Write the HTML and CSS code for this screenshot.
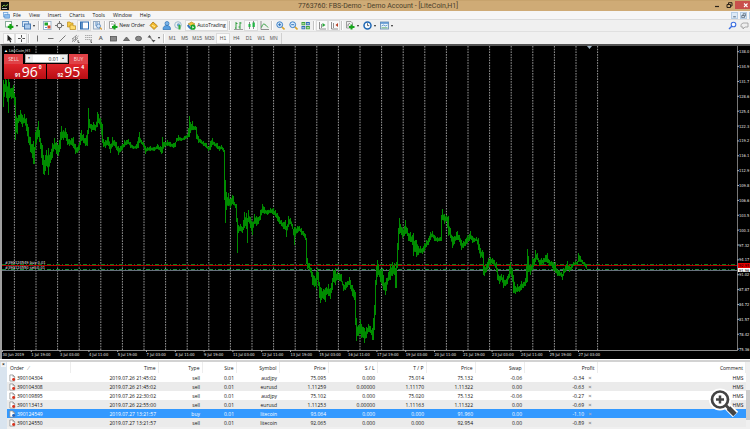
FILE: index.html
```html
<!DOCTYPE html>
<html lang="en">
<head>
    <meta charset="UTF-8">
    <meta name="viewport" content="width=device-width, initial-scale=1.0">
    <title>7763760: FBS-Demo - Demo Account - [LiteCoin,H1]</title>
    <link rel="stylesheet" href="styles.css">
</head>
<body>
    <!-- Icon sprite -->
    <svg class="sprite" aria-hidden="true">
        <symbol id="i-newchart" viewBox="0 0 9 9"><rect x=".5" y=".5" width="6" height="5.5" fill="#fff" stroke="#8a9"/><path d="M5.5 3v5.5M2.8 5.8h5.6" stroke="#12a312" stroke-width="2.2"/></symbol>
        <symbol id="i-profiles" viewBox="0 0 9 9"><rect x=".5" y=".5" width="6" height="5" fill="#d8e8f8" stroke="#6d96c4"/><rect x="2.5" y="3" width="6" height="5" fill="#a9c9ec" stroke="#4d7db5"/></symbol>
        <symbol id="i-market" viewBox="0 0 9 9"><rect x=".5" y=".5" width="7.5" height="8" fill="#fff" stroke="#9fb6cc"/><path d="M1.5 1.5h3.5v3H1.5z" fill="#1ca52c"/><path d="M4.5 4.5h3v3h-3z" fill="#d34a2c"/><path d="M2 6.5h2" stroke="#4a90d9"/></symbol>
        <symbol id="i-target" viewBox="0 0 9 9"><circle cx="4.5" cy="4.5" r="2.4" fill="none" stroke="#666"/><path d="M4.5 0v3M4.5 6v3M0 4.5h3M6 4.5h3" stroke="#777"/></symbol>
        <symbol id="i-folder" viewBox="0 0 9 9"><path d="M.5 1h2.5l1 1H6v4H.5z" fill="#f6c945" stroke="#b98a1b" stroke-width=".7"/><path d="M3 4h2.5l.8.8h2.2v3.7H3z" fill="#ffdc6b" stroke="#b98a1b" stroke-width=".7"/></symbol>
        <symbol id="i-terminal" viewBox="0 0 9 9"><rect x=".5" y="1" width="8" height="7" fill="#fff" stroke="#2f6fb5"/><path d="M2 1v7" stroke="#2f6fb5" stroke-width="1.5"/></symbol>
        <symbol id="i-tester" viewBox="0 0 9 9"><rect x=".5" y=".5" width="6" height="7.5" fill="#e8eef5" stroke="#93a9c2"/><path d="M2 2h3M2 4h2" stroke="#5c8ec4"/><circle cx="5.5" cy="5" r="2" fill="#cfe4fa" stroke="#5484b8" stroke-width=".8"/><path d="M7 6.5l1.8 2" stroke="#d59b35" stroke-width="1.2"/></symbol>
        <symbol id="i-order" viewBox="0 0 9 9"><path d="M.5.5h4l1.5 1.5v5.5H.5z" fill="#fff" stroke="#8a8a8a" stroke-width=".8"/><path d="M2 3h2.5" stroke="#888" stroke-width=".7"/><path d="M5.5 3.5v5M3 6h5.5" stroke="#16a61c" stroke-width="2"/></symbol>
        <symbol id="i-diamond" viewBox="0 0 9 9"><path d="M1 4.5L4 1l4.5 4L5 8.5z" fill="#f3bb2e" stroke="#a9730f" stroke-width=".8"/><path d="M3 4.5l3 1" stroke="#fff0a8"/></symbol>
        <symbol id="i-user" viewBox="0 0 9 9"><circle cx="5" cy="2.5" r="2" fill="#7db6ea" stroke="#2b70b5" stroke-width=".7"/><path d="M1 8.500c0-3 1.500-4 4-4s3.500 1.500 3.500 4z" fill="#5aa0e0" stroke="#2b70b5" stroke-width=".7"/></symbol>
        <symbol id="i-signal" viewBox="0 0 9 9"><circle cx="4" cy="4" r="3.3" fill="none" stroke="#9dbccf"/><circle cx="4.5" cy="4" r="1.7" fill="#6fa9d0"/><path d="M5.5 4v4.5" stroke="#35ad3c" stroke-width="2"/></symbol>
        <symbol id="i-auto" viewBox="0 0 9 9"><path d="M1 3l3.5-2L8 3 4.5 5z" fill="#f2c53c" stroke="#a77c15" stroke-width=".6"/><path d="M.8 4c1 2 2 3 4 4" stroke="#3676bd" stroke-width="2" fill="none"/><circle cx="6" cy="6.2" r="2.6" fill="#17a52a"/><path d="M5.3 5l2 1.2-2 1.2z" fill="#fff"/></symbol>
        <symbol id="i-bars" viewBox="0 0 9 9"><path d="M2 1v7M1 7h1M2 2.5h1.5M6 1v7M4.5 6H6M6 2h1.5" stroke="#35a043" fill="none"/><path d="M0 8.5h9" stroke="#777" stroke-width=".7"/></symbol>
        <symbol id="i-candle" viewBox="0 0 9 9"><path d="M2.5 1v7M6.5 0v8" stroke="#555" stroke-width=".7"/><path d="M1.5 3h2v3h-2zM5.5 1.5h2.3V6H5.5z" fill="#22b545"/></symbol>
        <symbol id="i-line" viewBox="0 0 9 9"><path d="M1 0v8.5h8" stroke="#777" fill="none" stroke-width=".8"/><path d="M1.5 6.5C3 1 5 3 8 6.5" stroke="#35a043" fill="none"/></symbol>
        <symbol id="i-zoomin" viewBox="0 0 9 9"><path d="M5.5 5.5l3 3" stroke="#dca52b" stroke-width="1.6"/><circle cx="3.7" cy="3.7" r="2.9" fill="#d9ecff" stroke="#3c7fc5"/><path d="M2.2 3.7h3M3.7 2.2v3" stroke="#2569ad" stroke-width=".9"/></symbol>
        <symbol id="i-zoomout" viewBox="0 0 9 9"><path d="M5.5 5.5l3 3" stroke="#dca52b" stroke-width="1.6"/><circle cx="3.7" cy="3.7" r="2.9" fill="#d9ecff" stroke="#3c7fc5"/><path d="M2.2 3.7h3" stroke="#2569ad" stroke-width=".9"/></symbol>
        <symbol id="i-tile" viewBox="0 0 9 9"><path d="M.5 1h3.8v3.3H.5zM5 5h3.8v3.3H5z" fill="#3ea33c"/><path d="M5 1h3.8v3.3H5zM.5 5h3.8v3.3H.5z" fill="#2d69b8"/><path d="M1.2 2.8h2.3M5.7 2.8H8M1.2 6.8h2.3M5.7 6.8H8" stroke="#e7f2d8" stroke-width=".9"/></symbol>
        <symbol id="i-scroll" viewBox="0 0 9 9"><path d="M1.5 1v7H8M3.5 3v4" stroke="#777" fill="none" stroke-width=".8"/><path d="M4.5 2l3 2-3 2z" fill="#23a436"/></symbol>
        <symbol id="i-shift" viewBox="0 0 9 9"><path d="M1.5 1v7H8M3.5 2v5" stroke="#777" fill="none" stroke-width=".8"/><path d="M8 2L5.500 4 8 6z" fill="#b84127"/></symbol>
        <symbol id="i-indicator" viewBox="0 0 9 9"><path d="M.5.5H5L6.5 2v5h-6z" fill="#eee" stroke="#888" stroke-width=".8"/><path d="M2 5.5c0-3 1-3 2-3" stroke="#666" fill="none" stroke-width=".8"/><path d="M5.5 3.5v5M3 6h5.5" stroke="#16a61c" stroke-width="2"/></symbol>
        <symbol id="i-clock" viewBox="0 0 9 9"><circle cx="4.5" cy="4.5" r="3.5" fill="#f4faff" stroke="#1d67b5" stroke-width="1.5"/><path d="M4.5 2.3v2.3h1.7" stroke="#444" fill="none" stroke-width=".8"/></symbol>
        <symbol id="i-template" viewBox="0 0 9 9"><rect x=".5" y="1" width="8" height="7" fill="#e8f3fd" stroke="#6f93b8" stroke-width=".9"/><path d="M.5 2h8" stroke="#3f82c8" stroke-width="1.3"/><path d="M1.5 5l2-1 2 1 2-1" stroke="#3b80b9" fill="none" stroke-width=".7"/><path d="M1.5 6.8h6" stroke="#58aa58" stroke-width=".8"/></symbol>
        <symbol id="i-search" viewBox="0 0 9 9"><circle cx="5.5" cy="3.5" r="2.3" fill="#fff" stroke="#3c6fe0" stroke-width="1.1"/><path d="M4 5L1 8" stroke="#3c6fe0" stroke-width="1.5"/></symbol>
        <symbol id="i-chat" viewBox="0 0 9 9"><path d="M3 2h5v4H5L3 8V6H1V3.5z" fill="#eee" stroke="#999" stroke-width=".8"/></symbol>
        <symbol id="i-cursor" viewBox="0 0 9 9"><path d="M2.5.8v6.5L4 6l1.3 2.5 1-.5-1.1-2.5h2z" fill="#222"/></symbol>
        <symbol id="i-cross" viewBox="0 0 9 9"><path d="M4.5 1v2.7M4.5 5.3V8M1 4.5h2.7M5.3 4.5H8" stroke="#555"/></symbol>
        <symbol id="i-vline" viewBox="0 0 9 9"><path d="M4.5 1.5v6" stroke="#777"/></symbol>
        <symbol id="i-hline" viewBox="0 0 9 9"><path d="M2 4.5h5.5" stroke="#777"/></symbol>
        <symbol id="i-trend" viewBox="0 0 9 9"><path d="M1.5 7.5l6-6" stroke="#777"/></symbol>
        <symbol id="i-channel" viewBox="0 0 9 9"><path d="M1 5l5-4M1 8l6.5-6M3 8l4-4M2 4v3M4.5 2v4" stroke="#888" stroke-width=".8"/><path d="M7 6v2.5h1.5" stroke="#444" fill="none" stroke-width=".8"/></symbol>
        <symbol id="i-fibo" viewBox="0 0 9 9"><path d="M1 1.5h7M1 3.5h7M1 5.5h7" stroke="#999" stroke-width=".8" stroke-dasharray="1.5 .5"/><path d="M7 6v2.5h1" stroke="#444" fill="none" stroke-width=".8"/></symbol>
        <symbol id="i-rect" viewBox="0 0 9 9"><rect x="1.5" y="2.5" width="6" height="4.5" fill="#888" stroke="#555" stroke-width=".8"/></symbol>
        <symbol id="i-tri" viewBox="0 0 9 9"><path d="M1.5 6.5h6l-3-3.5z" fill="#777" stroke="#555" stroke-width=".8"/></symbol>
        <symbol id="i-ellipse" viewBox="0 0 9 9"><ellipse cx="4.5" cy="4.5" rx="3" ry="2.2" fill="#888" stroke="#555" stroke-width=".8"/></symbol>
        <symbol id="i-arrows" viewBox="0 0 9 9"><path d="M.5 3.5l2-2.5 2 2.5zM4.5 6h4l-2 2.5z" fill="#555"/><path d="M2.5 3l4 4" stroke="#555"/></symbol>
        <symbol id="i-doc" viewBox="0 0 8 8"><path d="M1 .5h3.500l2 2v5H1z" fill="#fff" stroke="#8a8a8a" stroke-width=".8"/><path d="M4.5.5v2h2" fill="none" stroke="#777" stroke-width=".6"/><circle cx="5.3" cy="5.8" r="1.7" fill="currentColor"/></symbol>
    </svg>

    <header class="title-bar">
        <svg class="app-icon" viewBox="0 0 8 8"><rect width="8" height="8" fill="#111"/><path d="M1 5l2-2 1.5 1L7 2.5" stroke="#7fb23e" fill="none"/><path d="M1 6.5h5" stroke="#ddd" stroke-width=".8"/></svg>
        <h1>7763760: FBS-Demo - Demo Account - [LiteCoin,H1]</h1>
        <div class="window-controls">
            <button aria-label="Minimize"><svg viewBox="0 0 8 8"><path d="M2 5.5h4" stroke="#2a2218" stroke-width="1.2"/></svg></button>
            <button aria-label="Restore"><svg viewBox="0 0 8 8"><path d="M2 3.5h3.5v3H2zM3.5 3.5V1.7H7V5H5.5" stroke="#2a2218" fill="none"/></svg></button>
            <button class="close" aria-label="Close"><svg viewBox="0 0 8 8"><path d="M3 2.5l3.5 3.5M6.500 2.5L3 6" stroke="#fff" stroke-width="1.1"/></svg></button>
        </div>
    </header>

    <nav class="menu-bar">
        <svg class="menu-icon" viewBox="0 0 8 8"><rect x=".5" y=".5" width="5" height="5" fill="#e5f2ff" stroke="#79a9dc"/><rect x="2" y="3" width="5.5" height="4" fill="#8dbcec" stroke="#4c8bd0" stroke-width=".7"/></svg>
        <a href="#">File</a>
        <a href="#">View</a>
        <a href="#">Insert</a>
        <a href="#">Charts</a>
        <a href="#">Tools</a>
        <a href="#">Window</a>
        <a href="#">Help</a>
        <div class="child-controls">
            <button aria-label="Minimize chart"><svg viewBox="0 0 8 8"><path d="M2.5 5.5h3" stroke="#456"/></svg></button>
            <button aria-label="Restore chart"><svg viewBox="0 0 8 8"><path d="M2 4h3v2.5H2zM3.5 4V2h3v2.5H5" stroke="#456" fill="none" stroke-width=".8"/></svg></button>
            <button aria-label="Close chart"></button>
        </div>
    </nav>

    <div class="toolbar standard">
        <button class="tool drop" aria-label="New chart"><svg><use href="#i-newchart"/></svg></button>
        <button class="tool drop" aria-label="Profiles"><svg><use href="#i-profiles"/></svg></button>
        <span class="sep"></span>
        <div class="group panels">
            <button class="tool" aria-label="Market Watch"><svg><use href="#i-market"/></svg></button>
            <button class="tool" aria-label="Data Window"><svg><use href="#i-target"/></svg></button>
            <button class="tool" aria-label="Navigator"><svg><use href="#i-folder"/></svg></button>
            <button class="tool pressed" aria-label="Terminal"><svg><use href="#i-terminal"/></svg></button>
            <button class="tool" aria-label="Strategy Tester"><svg><use href="#i-tester"/></svg></button>
        </div>
        <span class="sep"></span>
        <button class="tool wide"><svg><use href="#i-order"/></svg>New Order</button>
        <div class="group trio">
            <button class="tool" aria-label="MetaEditor"><svg><use href="#i-diamond"/></svg></button>
            <button class="tool" aria-label="Community"><svg><use href="#i-user"/></svg></button>
            <button class="tool" aria-label="Signals"><svg><use href="#i-signal"/></svg></button>
        </div>
        <button class="tool wide pressed"><svg><use href="#i-auto"/></svg>AutoTrading</button>
        <span class="sep"></span>
        <div class="group trio">
            <button class="tool" aria-label="Bar chart"><svg><use href="#i-bars"/></svg></button>
            <button class="tool pressed" aria-label="Candlesticks"><svg><use href="#i-candle"/></svg></button>
            <button class="tool" aria-label="Line chart"><svg><use href="#i-line"/></svg></button>
        </div>
        <span class="sep"></span>
        <div class="group trio">
            <button class="tool" aria-label="Zoom in"><svg><use href="#i-zoomin"/></svg></button>
            <button class="tool" aria-label="Zoom out"><svg><use href="#i-zoomout"/></svg></button>
            <button class="tool" aria-label="Tile windows"><svg><use href="#i-tile"/></svg></button>
        </div>
        <span class="sep"></span>
        <button class="tool pressed" aria-label="Auto scroll"><svg><use href="#i-scroll"/></svg></button>
        <button class="tool pressed" aria-label="Chart shift"><svg><use href="#i-shift"/></svg></button>
        <span class="sep"></span>
        <button class="tool drop" aria-label="Indicators"><svg><use href="#i-indicator"/></svg></button>
        <button class="tool drop" aria-label="Periods"><svg><use href="#i-clock"/></svg></button>
        <button class="tool drop" aria-label="Templates"><svg><use href="#i-template"/></svg></button>
        <div class="right">
            <button class="tool" aria-label="Search"><svg><use href="#i-search"/></svg></button>
            <button class="tool" aria-label="Chat"><svg><use href="#i-chat"/></svg></button>
        </div>
    </div>

    <div class="toolbar">
        <button class="tool pressed" aria-label="Cursor"><svg><use href="#i-cursor"/></svg></button>
        <button class="tool pressed" aria-label="Crosshair"><svg><use href="#i-cross"/></svg></button>
        <span class="sep"></span>
        <div class="group nine">
            <button class="tool" aria-label="Vertical line"><svg><use href="#i-vline"/></svg></button>
            <button class="tool" aria-label="Horizontal line"><svg><use href="#i-hline"/></svg></button>
            <button class="tool" aria-label="Trendline"><svg><use href="#i-trend"/></svg></button>
            <button class="tool" aria-label="Channel"><svg><use href="#i-channel"/></svg></button>
            <button class="tool" aria-label="Fibonacci"><svg><use href="#i-fibo"/></svg></button>
            <button class="tool letter">A</button>
            <button class="tool" aria-label="Rectangle"><svg><use href="#i-rect"/></svg></button>
            <button class="tool" aria-label="Triangle"><svg><use href="#i-tri"/></svg></button>
            <button class="tool" aria-label="Ellipse"><svg><use href="#i-ellipse"/></svg></button>
        </div>
        <button class="tool drop" aria-label="Arrows"><svg><use href="#i-arrows"/></svg></button>
        <span class="sep"></span>
        <div class="group nine periods">
            <button class="tool">M1</button>
            <button class="tool">M5</button>
            <button class="tool">M15</button>
            <button class="tool">M30</button>
            <button class="tool pressed">H1</button>
            <button class="tool">H4</button>
            <button class="tool">D1</button>
            <button class="tool">W1</button>
            <button class="tool">MN</button>
        </div>
        <span class="edge"></span>
    </div>

    <main class="chart">
        <svg class="plot" id="plot"></svg>
        <svg class="prices" id="prices"></svg>

        <div class="one-click">
            <p class="symbol">▲ LiteCoin,H1</p>
            <div class="trade">
                <button class="side">SELL</button>
                <div class="volume">
                    <button aria-label="Decrease volume">▼</button>
                    <input type="text" value="0.01" aria-label="Volume">
                    <button aria-label="Increase volume">▲</button>
                </div>
                <button class="side">BUY</button>
            </div>
            <div class="quotes">
                <button class="quote"><small>91</small><b>96</b><sup>0</sup></button>
                <button class="quote"><small>92</small><b>95</b><sup>4</sup></button>
            </div>
        </div>
    </main>

    <section class="terminal">
        <div class="grip"><button aria-label="Close terminal">×</button></div>
        <table>
            <colgroup>
                <col class="c-order"><col class="c-time"><col class="c-type"><col class="c-size"><col class="c-symbol">
                <col class="c-num"><col class="c-num"><col class="c-num"><col class="c-num"><col class="c-num">
                <col class="c-profit"><col>
            </colgroup>
            <thead>
                <tr><th>Order <i>⁄</i></th><th>Time</th><th>Type</th><th>Size</th><th>Symbol</th><th>Price</th><th>S / L</th><th>T / P</th><th>Price</th><th>Swap</th><th>Profit</th><th>Comment</th></tr>
            </thead>
            <tbody>
                <tr><td><svg><use href="#i-doc"/></svg>390104304</td><td>2019.07.26 21:45:02</td><td>sell</td><td>0.01</td><td>audjpy</td><td>75.095</td><td>0.000</td><td>75.014</td><td>75.132</td><td>-0.06</td><td>-0.34<button aria-label="Close order">×</button></td><td>HMS</td></tr>
                <tr><td><svg><use href="#i-doc"/></svg>390104308</td><td>2019.07.26 21:45:02</td><td>sell</td><td>0.01</td><td>eurusd</td><td>1.11259</td><td>0.00000</td><td>1.11170</td><td>1.11322</td><td>0.00</td><td>-0.63<button aria-label="Close order">×</button></td><td>HMS</td></tr>
                <tr><td><svg><use href="#i-doc"/></svg>390109895</td><td>2019.07.26 22:30:02</td><td>sell</td><td>0.01</td><td>audjpy</td><td>75.102</td><td>0.000</td><td>75.020</td><td>75.132</td><td>-0.06</td><td>-0.27<button aria-label="Close order">×</button></td><td>HMS</td></tr>
                <tr><td><svg><use href="#i-doc"/></svg>390113413</td><td>2019.07.26 22:55:00</td><td>sell</td><td>0.01</td><td>eurusd</td><td>1.11253</td><td>0.00000</td><td>1.11163</td><td>1.11322</td><td>0.00</td><td>-0.69<button aria-label="Close order">×</button></td><td>HMS</td></tr>
                <tr class="selected"><td><svg><use href="#i-doc"/></svg>390124549</td><td>2019.07.27 13:21:57</td><td>buy</td><td>0.01</td><td>litecoin</td><td>93.064</td><td>0.000</td><td>0.000</td><td>91.960</td><td>0.00</td><td>-1.10<button aria-label="Close order">×</button></td><td></td></tr>
                <tr><td><svg><use href="#i-doc"/></svg>390124550</td><td>2019.07.27 13:21:57</td><td>sell</td><td>0.01</td><td>litecoin</td><td>92.065</td><td>0.000</td><td>0.000</td><td>92.954</td><td>0.00</td><td>-0.89<button aria-label="Close order">×</button></td><td></td></tr>
            </tbody>
        </table>
        <div class="scrollbar"><span></span></div>
    </section>

    <button class="magnify" aria-label="Enlarge">
        <svg viewBox="0 0 30 30"><path d="M18 18l8.5 8.5" stroke="#fff" stroke-width="7.5"/><circle cx="11" cy="11.5" r="9" fill="#fff" stroke="#fff" stroke-width="4"/><circle cx="11" cy="11.5" r="8" fill="#fff" stroke="#444" stroke-width="2.7"/><path d="M17 17.5l3 3" stroke="#444" stroke-width="3"/><path d="M19.5 20l6.5 6.5" stroke="#444" stroke-width="5"/><path d="M11 7.5v8M7 11.5h8" stroke="#444" stroke-width="2.5"/></svg>
    </button>

    <script src="chart.js"></script>
</body>
</html>
```

FILE: styles.css
```css
:root {
    --title-color: #cfab76;
    --bar-color: #f0f0f0;
    --border-color: #c4c4c4;
    --select-color: #3399ff;
}

* {
    box-sizing: border-box;
}

body {
    margin: 0;
    min-height: 100vh;
    display: flex;
    flex-direction: column;
    overflow: hidden;
    background: var(--bar-color);
    font-family: "Open Sans", "Noto Sans", sans-serif;
    font-size: 5px;
    color: #111;
}

button {
    margin: 0;
    padding: 0;
    border: 0;
    background: none;
    font: inherit;
    color: inherit;
    line-height: 1;
}

.sprite {
    display: none;
}

/* Title and menu */
.title-bar {
    height: 11px;
    display: flex;
    align-items: center;
    padding-left: 1px;
    background: var(--title-color);
    border-top: 1px solid #c7a36d;
}

.app-icon {
    width: 8px;
    height: 8px;
}

.title-bar h1 {
    flex: 1;
    margin: 0;
    padding-left: 36px;
    text-align: center;
    font-family: Roboto, "Open Sans", sans-serif;
    font-size: 7px;
    line-height: 10px;
    font-weight: 400;
    color: #4a3e2a;
}

.window-controls {
    display: flex;
    align-self: flex-start;
}

.window-controls button {
    width: 12px;
    height: 8px;
}

.window-controls svg,
.child-controls svg {
    display: block;
    width: 8px;
    height: 8px;
    margin: auto;
}

.window-controls .close {
    width: 15px;
    padding-left: 4px;
    background: #c9504c;
}

.menu-bar {
    height: 9px;
    display: flex;
    align-items: center;
    gap: 8px;
    padding-left: 3px;
    background: #f6f6f6;
    border-bottom: 1px solid #dcdcdc;
}

.menu-bar a {
    color: #111;
    text-decoration: none;
    line-height: 8px;
}

.menu-icon {
    width: 7px;
    height: 7px;
    margin-right: -5px;
}

.child-controls {
    display: flex;
    gap: 2px;
    width: 19px;
    margin-left: auto;
    overflow: hidden;
}

.child-controls button {
    flex: 0 0 7px;
    height: 7px;
    overflow: hidden;
    background: #dceaf7;
    border: 1px solid #b5cde4;
}

.child-controls svg {
    margin: -1px;
    width: 7px;
    height: 7px;
}

/* Toolbars */
.toolbar {
    height: 12px;
    display: flex;
    align-items: center;
    padding-left: 3px;
}

.toolbar.standard {
    border-bottom: 1px solid #e0e0e0;
}

.tool {
    width: 12px;
    height: 11px;
    display: flex;
    align-items: center;
    justify-content: center;
    flex: none;
}

.tool svg {
    width: 9px;
    height: 9px;
    flex: none;
}

.tool.pressed {
    background: #fafafa;
    border: 1px solid #dcdcdc;
}

.tool.drop {
    width: 17px;
    justify-content: flex-start;
    gap: 2px;
    padding-left: 2px;
}

.tool.drop::after {
    content: "";
    border: 1px solid transparent;
    border-top: 2px solid #222;
    border-bottom: 0;
}

.tool.wide {
    width: 40px;
    gap: 1px;
}

.tool.wide.pressed {
    width: 43px;
}

.tool.letter {
    font-size: 6px;
    font-weight: 600;
    color: #555;
}

.group {
    display: flex;
}

.group .tool {
    flex: 1;
    width: auto;
}

.panels {
    width: 62px;
}

.trio {
    width: 38px;
}

.nine {
    width: 114px;
}

.periods {
    font-family: "Liberation Sans", sans-serif;
    font-size: 5px;
    color: #555;
}

.sep {
    width: 2px;
    height: 9px;
    margin: 0 1px;
    border-left: 1px solid var(--border-color);
    border-right: 1px solid #fff;
}

.edge {
    width: 1px;
    height: 11px;
    margin-left: 1px;
    background: #d0d0d0;
}

.right {
    display: flex;
    margin-left: auto;
}

/* Chart */
.chart {
    position: relative;
    display: flex;
    height: 315px;
    background: #000;
    border-top: 2px solid #555;
    border-left: 2px solid #a0a0a0;
}

.plot {
    flex: 1;
    min-width: 0;
    height: 100%;
}

.prices {
    width: 13px;
    height: 100%;
}

.chart text {
    font-family: "DejaVu Sans Condensed", "DejaVu Sans", sans-serif;
    font-size: 4px;
    fill: #e6e6e6;
}

.chart .dark {
    fill: #000;
}

.one-click {
    position: absolute;
    left: 2px;
    top: 1px;
    width: 84px;
    color: #fff;
}

.symbol {
    margin: 0;
    font-size: 4px;
    line-height: 7px;
}

.trade {
    display: flex;
    justify-content: space-between;
    height: 10px;
    background: #000;
}

.side {
    width: 19px;
    background: #e04247;
    color: #f7dada;
}

.volume {
    display: flex;
    align-items: center;
    width: 43px;
    height: 9px;
    background: #fff;
    border: 1px solid #aaa;
}

.volume button {
    width: 7px;
    height: 7px;
    font-size: 3px;
    color: #333;
    background: #eee;
}

.volume input {
    flex: 1;
    min-width: 0;
    height: 7px;
    padding: 0 1px;
    border: 0;
    text-align: right;
    font: inherit;
    color: #222;
}

.quotes {
    display: flex;
    gap: 1px;
    background: #000;
}

.quote {
    flex: 1;
    height: 15px;
    display: flex;
    align-items: flex-end;
    justify-content: flex-end;
    gap: 1px;
    padding-right: 4px;
    background: linear-gradient(#e0262c, #b80d13);
}

.quote small {
    font-size: 5px;
    font-weight: 700;
    line-height: 8px;
}

.quote b {
    font-size: 14px;
    font-weight: 400;
    line-height: 15px;
}

.quote sup {
    align-self: flex-start;
    font-size: 5px;
    font-weight: 700;
    line-height: 7px;
}

/* Terminal */
.terminal {
    display: flex;
    flex: 1;
    border-top: 1px solid #fff;
    box-shadow: inset 0 2px #d2d2d2;
    padding-top: 2px;
}

.grip {
    width: 7px;
    background: #d9e4ef;
}

.grip button {
    display: block;
    margin: 0 auto;
    width: 5px;
    background: #f4f4f4;
    font-weight: 700;
}

table {
    flex: 1;
    align-self: flex-start;
    table-layout: fixed;
    border-collapse: collapse;
    background: #fff;
    width: 100%;
}

.c-order { width: 63px; }
.c-time { width: 88px; }
.c-type { width: 44px; }
.c-size { width: 34px; }
.c-symbol { width: 43px; }
.c-num { width: 49px; }
.c-profit { width: 73px; }

th,
td {
    height: 9px;
    padding: 0 2px;
    text-align: right;
    line-height: 8px;
    font-weight: 400;
    white-space: nowrap;
}

th {
    height: 11px;
    border-right: 1px solid #ededed;
}

th i {
    padding-left: 3px;
    color: #888;
}

th:first-child,
td:first-child {
    text-align: left;
}

th:first-child {
    padding-left: 3px;
}

td svg {
    width: 7px;
    height: 8px;
    margin-right: 1px;
    vertical-align: top;
    color: #d8321c;
}

td button {
    width: 4px;
    margin: 0 3px 0 4px;
    font-size: 6px;
    color: #666;
}

tbody tr:nth-child(even) {
    background: #ebebeb;
}

tbody .selected {
    background: var(--select-color);
    color: #fff;
}

.selected svg {
    color: #1d62c0;
}

.selected button {
    color: #d8b49a;
}

.scrollbar {
    width: 4px;
    background: #f0f0f0;
    padding-top: 28px;
}

.scrollbar span {
    display: block;
    height: 30px;
    background: #cdcdcd;
}

/* Enlarge badge over the terminal */
.magnify {
    position: absolute;
    right: 11px;
    bottom: 11px;
    width: 30px;
    height: 30px;
}

.magnify svg {
    display: block;
}
```

FILE: chart.js
```js
// Price envelope: x, high, low
const range = [
    3,80,107, 5,78,92, 8,78,113, 9,82,98, 11,88,99, 13,85,98, 14,93,105, 15,97,140, 17,118,134, 18,115,123,
    20,110,122, 22,115,127, 24,114,123, 26,118,131, 28,127,143, 30,137,152, 32,144,158, 33,141,164, 34,147,164,
    35,132,150, 36,130,143, 38,121,137, 39,130,142, 40,138,149, 41,143,158, 42,145,165, 43,155,174, 44,160,175,
    45,155,171, 46,150,166, 48,148,175, 50,152,163, 52,143,158, 54,138,149, 56,142,154, 58,145,156, 59,140,152,
    60,132,149, 61,126,140, 63,130,140, 65,128,138, 67,134,145, 69,139,146, 71,138,145, 73,137,148, 75,144,154,
    77,147,153, 79,142,150, 80,133,145, 81,130,141, 83,134,143, 85,138,146, 87,130,146, 88,108,134, 89,119,128,
    91,124,132, 93,122,130, 95,125,131, 97,112,127, 98,114,123, 100,118,128, 102,124,143, 103,139,147, 105,140,148,
    107,137,145, 108,137,146, 110,144,153, 112,137,147, 114,140,146, 116,142,150, 118,146,155, 120,146,152,
    122,144,150, 124,140,147, 126,140,145, 128,139,144, 130,142,148, 133,146,149, 136,144,149, 138,137,148,
    139,132,143, 141,140,144, 143,142,147, 145,146,154, 147,147,151, 150,146,151, 154,147,151, 157,144,149,
    160,146,152, 161,147,154, 162,137,153, 164,142,147, 167,140,146, 170,142,147, 173,143,148, 175,142,147,
    176,138,142, 178,135,141, 181,138,141, 184,136,140, 187,134,138, 188,128,137, 189,116,137, 190,122,133,
    192,121,130, 193,126,130, 195,126,130, 196,127,139, 198,136,143, 200,139,143, 203,141,146, 206,143,148,
    208,147,151, 210,141,150, 212,138,145, 214,142,146, 217,143,149, 219,146,151, 221,145,149, 223,148,152,
    224,150,200, 225,180,223, 226,192,210, 228,193,206, 230,199,208, 232,195,204, 233,196,205, 235,204,208,
    236,204,222, 237,218,253, 238,225,233, 240,224,231, 242,227,233, 243,220,230, 244,212,228, 246,213,229,
    247,218,243, 248,210,222, 250,217,228, 252,222,235, 254,214,224, 256,216,226, 258,217,224, 260,210,220,
    262,204,213, 264,207,214, 267,210,215, 270,208,213, 273,208,215, 275,210,217, 277,213,221, 279,217,224,
    281,220,226, 283,222,229, 285,220,230, 286,226,237, 288,216,227, 290,218,224, 292,224,229, 294,227,245,
    295,227,236, 297,226,233, 299,226,231, 301,228,235, 303,231,236, 305,234,240, 306,238,264, 307,258,269,
    309,263,270, 311,268,277, 312,272,285, 314,276,287, 316,272,289, 317,268,280, 318,272,286, 319,282,298,
    320,287,303, 321,288,300, 323,289,299, 325,288,302, 326,287,295, 328,284,296, 330,288,299, 331,283,293,
    332,278,290, 333,270,282, 335,268,285, 337,272,280, 339,273,281, 341,274,282, 343,284,291, 345,282,290,
    347,281,287, 349,277,285, 350,280,289, 352,285,296, 354,290,300, 355,292,325, 356,318,341, 358,325,336,
    360,320,334, 361,324,338, 363,327,338, 364,328,343, 366,327,338, 368,324,332, 370,326,333, 372,328,340,
    373,318,340, 374,305,330, 375,280,315, 376,266,285, 377,260,277, 378,264,275, 380,270,282, 382,268,286,
    383,275,290, 385,282,295, 386,278,291, 388,272,281, 390,264,280, 392,262,276, 394,263,275, 395,268,288,
    396,262,288, 397,243,268, 398,228,250, 399,218,234, 400,224,233, 402,228,238, 404,226,236, 405,220,234,
    407,228,236, 408,233,241, 410,232,242, 412,235,245, 413,233,256, 415,240,252, 416,240,257, 418,246,255,
    420,246,253, 422,248,254, 424,243,251, 426,240,247, 428,238,245, 430,232,240, 432,231,237, 434,235,241,
    437,237,242, 440,237,241, 441,215,241, 442,209,220, 444,214,224, 446,215,221, 448,216,236, 450,228,238,
    452,236,248, 454,236,244, 456,232,240, 457,231,240, 459,235,242, 461,240,250, 463,241,248, 465,239,246,
    467,235,243, 469,234,241, 470,231,239, 472,236,243, 474,238,242, 476,237,241, 478,238,250, 480,248,258,
    482,250,258, 483,252,275, 484,266,276, 486,264,272, 488,258,268, 490,257,264, 492,258,264, 494,260,266,
    496,262,272, 497,268,280, 499,276,284, 501,274,280, 503,275,288, 505,280,286, 507,276,284, 509,266,278,
    510,262,274, 512,268,282, 513,275,293, 515,286,294, 517,284,292, 519,286,292, 521,281,290, 523,282,288,
    525,278,286, 527,249,282, 528,256,272, 530,266,275, 532,258,270, 534,258,265, 535,250,262, 537,253,260,
    539,260,266, 541,258,265, 543,258,264, 545,255,262, 547,253,263, 549,260,266, 551,261,266, 553,262,271,
    555,262,273, 557,270,276, 559,270,276, 561,272,277, 562,274,280, 563,268,276, 565,266,272, 567,261,270,
    569,266,272, 571,265,270, 573,262,266, 575,261,265, 577,261,265, 578,253,262, 580,256,262, 582,260,264,
    584,262,266, 586,264,269, 587,267,270
];

const times = ['30 Jun 2019', '1 Jul 19:00', '3 Jul 03:00', '4 Jul 11:00', '5 Jul 19:00', '7 Jul 03:00',
    '8 Jul 11:00', '9 Jul 19:00', '11 Jul 03:00', '12 Jul 11:00', '13 Jul 19:00', '15 Jul 03:00',
    '16 Jul 11:00', '17 Jul 19:00', '19 Jul 03:00', '20 Jul 11:00', '21 Jul 19:00', '23 Jul 03:00',
    '24 Jul 11:00', '25 Jul 19:00', '27 Jul 03:00'];
const prices = ['138.0', '134.9', '131.7', '128.6', '125.4', '122.3', '119.2', '116.1', '112.9', '109.8',
    '106.6', '103.5', '100.3', '97.32', '94.17', '91.02', '87.87', '84.72', '81.57', '78.42', '75.36'];

// Chart origin inside the window
const left = 2;
const top0 = 46;
const bottom = 350 - top0;

// Vertical period separators
let plot = '';
for (let i = 0; i < 28; i++) {
    const x = 14.4 + i * 21.6 - left;
    plot += `<path d="M${x} 0V${bottom}" stroke="#999" stroke-dasharray="1.6 1.1"/>`;
}

// Order and bid/ask levels
const level = (y, color, dash) =>
    `<line x1="0" x2="100%" y1="${y - top0}" y2="${y - top0}" stroke="${color}" stroke-dasharray="${dash}"/>`;
plot += level(264.5, '#0b7a1c', '4 2 1 2') + level(265.5, '#b40000', 'none');
plot += level(270.5, '#66717c', 'none') + level(269.5, '#1d8a35', '4 2 1 2');

// Bars, the ones between two points a little shorter so the wicks show
let bars = '';
let n = 0;
for (let i = 0; i < range.length - 3; i += 3) {
    const [x, high, low, nextX, nextHigh, nextLow] = range.slice(i, i + 6);
    for (let bx = x; bx < nextX; bx++) {
        const t = (bx - x) / (nextX - x);
        const h = high + (nextHigh - high) * t;
        const l = low + (nextLow - low) * t;
        const trim = bx === x ? 0 : (l - h) * [0.25, 0.1, 0.3][n++ % 3];
        bars += `M${bx + 0.5 - left} ${h + trim - top0}V${l - trim / 2 - top0}`;
    }
}
plot += `<path d="${bars}" stroke="#008c00" fill="none"/>`;

// Time axis
plot += `<line x1="0" x2="100%" y1="${bottom + 0.5}" y2="${bottom + 0.5}" stroke="#8c8c8c"/>`;
times.forEach((time, i) => {
    const x = 2.5 + i * 28.8 - left;
    plot += `<path d="M${x} ${bottom}v2" stroke="#aaa"/><text x="${x}" y="${bottom + 6}">${time}</text>`;
});
plot += `<text x="3" y="${264 - top0}">#390124549 buy 0.01</text><text x="3" y="${269 - top0}">#390124550 sell 0.01</text>`;
plot += '<path d="M585 0h5l-2.5 3z" fill="#9fb4c4"/>';
document.getElementById('plot').innerHTML = plot;

// Price axis
let axis = `<path d="M.5 0V${bottom + 1}" stroke="#777"/>`;
prices.forEach((price, i) => {
    const y = 51.7 + i * 14.87 - top0;
    axis += `<path d="M0 ${y}h2" stroke="#aaa"/><text x="2" y="${y + 1.5}">${price}</text>`;
});
axis += `<rect x="1" y="${263 - top0}" width="12" height="5" fill="#e80000"/><text class="dark" x="2" y="${267 - top0}">92.95</text>`;
axis += `<rect x="1" y="${268 - top0}" width="12" height="4" fill="#fff"/><text class="dark" x="2" y="${271.5 - top0}">91.96</text>`;
document.getElementById('prices').innerHTML = axis;
```
